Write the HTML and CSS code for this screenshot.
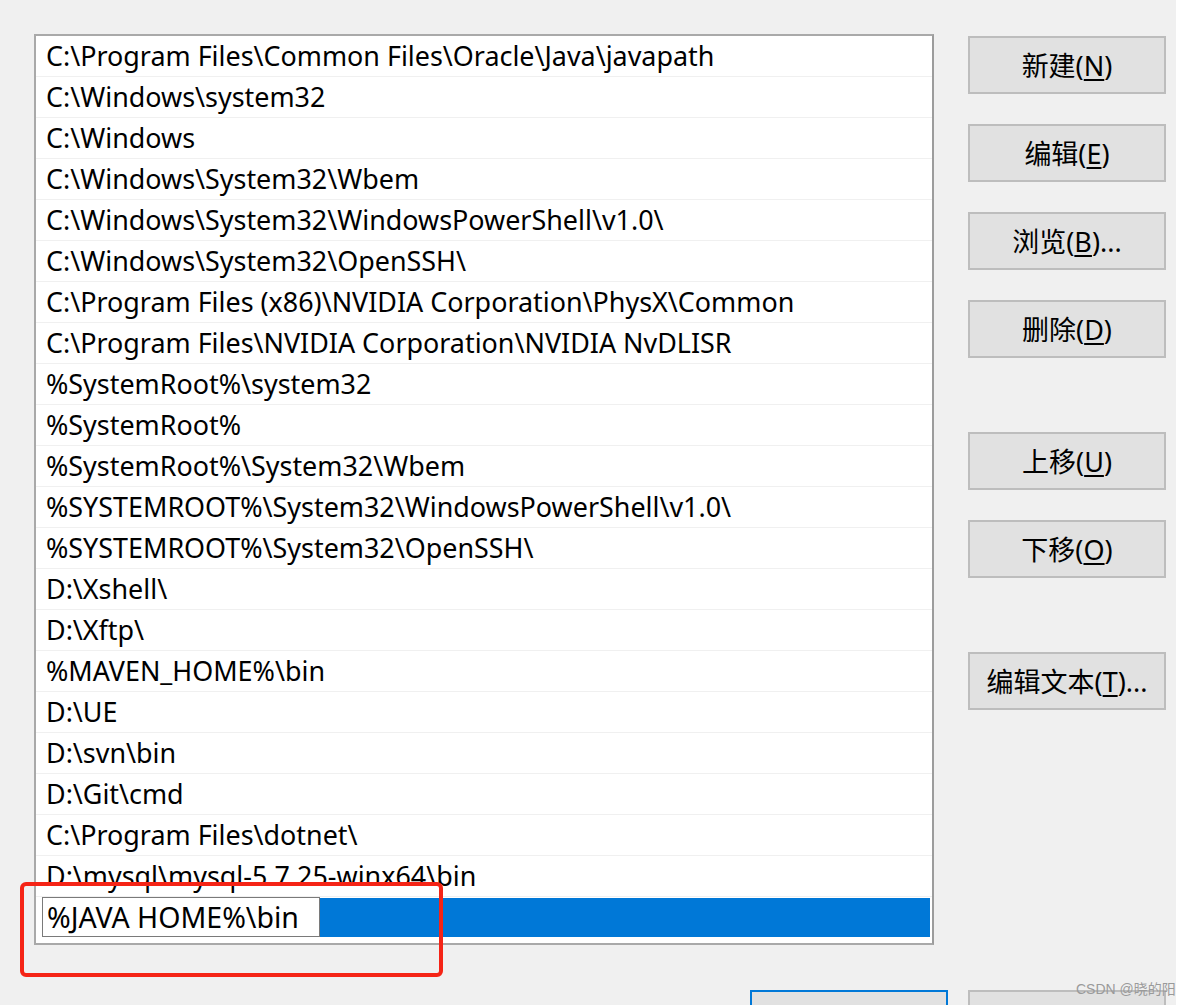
FILE: index.html
```html
<!DOCTYPE html>
<html lang="zh-CN">
<head>
  <meta charset="UTF-8" />
  <title>编辑环境变量</title>
  <link rel="stylesheet" href="styles.css">
</head>
<body>
  <div class="dialog">
    <div class="main">
      <div class="left">
        <div class="list">
          <div class="row">C:\Program Files\Common Files\Oracle\Java\javapath</div>
          <div class="row">C:\Windows\system32</div>
          <div class="row">C:\Windows</div>
          <div class="row">C:\Windows\System32\Wbem</div>
          <div class="row">C:\Windows\System32\WindowsPowerShell\v1.0\</div>
          <div class="row">C:\Windows\System32\OpenSSH\</div>
          <div class="row">C:\Program Files (x86)\NVIDIA Corporation\PhysX\Common</div>
          <div class="row">C:\Program Files\NVIDIA Corporation\NVIDIA NvDLISR</div>
          <div class="row">%SystemRoot%\system32</div>
          <div class="row">%SystemRoot%</div>
          <div class="row">%SystemRoot%\System32\Wbem</div>
          <div class="row">%SYSTEMROOT%\System32\WindowsPowerShell\v1.0\</div>
          <div class="row">%SYSTEMROOT%\System32\OpenSSH\</div>
          <div class="row">D:\Xshell\</div>
          <div class="row">D:\Xftp\</div>
          <div class="row">%MAVEN_HOME%\bin</div>
          <div class="row">D:\UE</div>
          <div class="row">D:\svn\bin</div>
          <div class="row">D:\Git\cmd</div>
          <div class="row">C:\Program Files\dotnet\</div>
          <div class="row">D:\mysql\mysql-5.7.25-winx64\bin</div>
          <div class="row selected">
            <div class="edit">%JAVA HOME%\bin</div>
            <div class="fill"></div>
          </div>
        </div>
        <div class="footer">
          <button class="btn default" aria-label="确定"></button>
          <button class="btn" aria-label="取消"></button>
        </div>
      </div>
      <div class="side">
        <button class="btn">新建(<u>N</u>)</button>
        <button class="btn">编辑(<u>E</u>)</button>
        <button class="btn">浏览(<u>B</u>)...</button>
        <button class="btn">删除(<u>D</u>)</button>
        <button class="btn group">上移(<u>U</u>)</button>
        <button class="btn">下移(<u>O</u>)</button>
        <button class="btn group">编辑文本(<u>T</u>)...</button>
      </div>
    </div>
    <div class="highlight"></div>
    <div class="watermark">CSDN @晓的阳</div>
  </div>
</body>
</html>
```

FILE: styles.css
```css
body {
  margin: 0;
  background: #fff;
  font-family: "Noto Sans", "Noto Sans CJK SC", sans-serif;
  color: #000;
}
.dialog {
  position: relative;
  width: 1176px;
  height: 1005px;
  background: #f0f0f0;
  overflow: hidden;
}
.main {
  display: flex;
  gap: 34px;
  padding: 34px 0 0 34px;
}
.list {
  width: 896px;
  height: 907px;
  background: #fff;
  border: 2px solid #a9a9a9;
  border-right-color: #9c9c9c;
}
.row {
  height: 40px;
  line-height: 40px;
  padding-left: 10px;
  font-size: 26.9px;
  border-bottom: 1px solid #f0f0f0;
  white-space: nowrap;
  overflow: hidden;
}
.row.selected {
  display: flex;
  padding-left: 6px;
  border-bottom: none;
  height: 40px;
}
.edit {
  width: 272px;
  height: 38px;
  line-height: 38px;
  background: #fff;
  border: 1px solid #7a7a7a;
  padding-left: 4px;
  font-size: 28.5px;
}
.fill {
  flex: 1;
  height: 39px;
  margin-top: 1px;
  margin-right: 2px;
  background: #0078d7;
}
.footer {
  display: flex;
  justify-content: flex-end;
  gap: 20px;
  padding-top: 45px;
  margin-right: -232px;
}
.side {
  display: flex;
  flex-direction: column;
  padding-top: 2px;
}
.btn {
  width: 198px;
  height: 58px;
  margin-bottom: 30px;
  background: #e1e1e1;
  border: 2px solid #bdbdbd;
  font-family: "Noto Sans", "Noto Sans CJK SC", sans-serif;
  font-size: 27px;
  color: #000;
  padding: 0 0 2px;
}
.btn u {
  text-underline-offset: 3px;
}
.btn.group {
  margin-top: 44px;
}
.btn.default {
  border-color: #0078d7;
}
.highlight {
  position: absolute;
  left: 20px;
  top: 882px;
  width: 415px;
  height: 87px;
  border: 4px solid #f52416;
  border-radius: 6px;
}
.watermark {
  position: absolute;
  left: 1076px;
  top: 978px;
  font-size: 14px;
  color: #9a9a9a;
  font-family: "Liberation Sans", "Noto Sans CJK SC", sans-serif;
}
```
